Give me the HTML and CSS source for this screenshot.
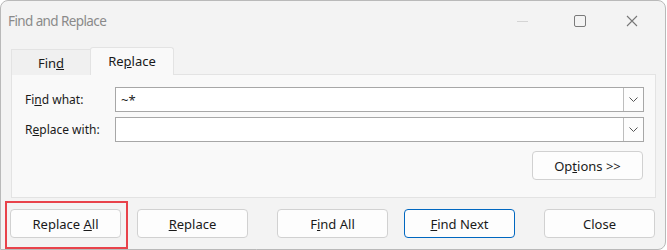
FILE: index.html
```html
<!DOCTYPE html>
<html lang="en">
<head>
    <meta charset="UTF-8">
    <title>Find and Replace</title>
    <link rel="stylesheet" href="styles.css">
</head>
<body>
    <div class="window">
        <div class="titlebar">
            <span class="title">Find and Replace</span>
            <div class="controls">
                <span class="ctl min"></span>
                <span class="ctl max"></span>
                <span class="ctl close">
                    <svg width="12" height="12" viewBox="0 0 12 12"><path d="M1 1 L11 11 M11 1 L1 11" stroke="#777" stroke-width="1.1" fill="none"/></svg>
                </span>
            </div>
        </div>

        <div class="tabs">
            <div class="tab">Fin<u>d</u></div>
            <div class="tab active">Re<u>p</u>lace</div>
        </div>

        <div class="panel">
            <div class="row">
                <label>Fi<u>n</u>d what:</label>
                <div class="combo">
                    <span class="value">~*</span>
                    <span class="drop"><svg width="9" height="5" viewBox="0 0 9 5"><path d="M0.5 0.5 L4.5 4.5 L8.5 0.5" stroke="#555" fill="none"/></svg></span>
                </div>
            </div>
            <div class="row">
                <label>R<u>e</u>place with:</label>
                <div class="combo">
                    <span class="value"></span>
                    <span class="drop"><svg width="9" height="5" viewBox="0 0 9 5"><path d="M0.5 0.5 L4.5 4.5 L8.5 0.5" stroke="#555" fill="none"/></svg></span>
                </div>
            </div>
            <div class="options-row">
                <button class="btn">Op<u>t</u>ions &gt;&gt;</button>
            </div>
        </div>

        <div class="actions">
            <button class="btn highlighted">Replace <u>A</u>ll</button>
            <button class="btn"><u>R</u>eplace</button>
            <button class="btn wide-gap">F<u>i</u>nd All</button>
            <button class="btn primary"><u>F</u>ind Next</button>
            <button class="btn wide-gap">Close</button>
        </div>
    </div>
</body>
</html>
```

FILE: styles.css
```css
body {
    margin: 0;
    font-family: 'Noto Sans', 'Open Sans', sans-serif;
    background-color: #ffffff;
}

.window {
    width: 666px;
    height: 250px;
    box-sizing: border-box;
    border: 1px solid #b9b9b9;
    border-radius: 8px 8px 8px 0;
    background-color: #f3f3f3;
    overflow: hidden;
}

.titlebar {
    height: 40px;
    display: flex;
    align-items: center;
    justify-content: space-between;
    padding-left: 7px;
}

.title {
    font-size: 13.5px;
    letter-spacing: -0.6px;
    color: #8a8a8a;
}

.controls {
    display: flex;
    align-items: center;
    height: 100%;
}

.ctl {
    width: 58px;
    height: 100%;
    display: flex;
    align-items: center;
    justify-content: center;
}

.min::before {
    content: '';
    width: 11px;
    border-top: 1px solid #d4d4d4;
}

.max::before {
    content: '';
    width: 10px;
    height: 10px;
    border: 1px solid #7a7a7a;
    border-radius: 2px;
}

.close {
    width: 46px;
    padding-right: 10px;
}

.tabs {
    display: flex;
    align-items: flex-end;
    height: 34px;
    margin-left: 10px;
    margin-bottom: -1px;
}

.tab {
    font-size: 13px;
    color: #1a1a1a;
    display: flex;
    align-items: center;
    justify-content: center;
    box-sizing: border-box;
}

.tab:first-child {
    width: 79px;
    height: 26px;
    border: 1px solid #e3e3e3;
    border-bottom: none;
    border-right: none;
    background-color: #f0f0f0;
}

.tab.active {
    width: 84px;
    height: 28px;
    background-color: #f9f9f9;
    border: 1px solid #e3e3e3;
    border-bottom: none;
    border-radius: 3px 3px 0 0;
    padding-bottom: 2px;
}

.panel {
    margin-left: 10px;
    width: 645px;
    height: 124px;
    box-sizing: border-box;
    background-color: #f9f9f9;
    border: 1px solid #e3e3e3;
    padding: 12px 11px 0 13px;
}

.row {
    display: flex;
    align-items: center;
    margin-bottom: 5px;
}

.row label {
    width: 90px;
    font-size: 12px;
    color: #1a1a1a;
}

.combo {
    flex: 1;
    height: 25px;
    box-sizing: border-box;
    border: 1px solid #a7a7a7;
    background-color: #ffffff;
    display: flex;
    align-items: center;
}

.value {
    flex: 1;
    padding-left: 5px;
    font-size: 13px;
    color: #1a1a1a;
}

.drop {
    width: 19px;
    height: 100%;
    border-left: 1px solid #bdbdbd;
    background-color: #fdfdfd;
    display: flex;
    align-items: center;
    justify-content: center;
}

.options-row {
    display: flex;
    justify-content: flex-end;
    margin-top: 9px;
    padding-right: 1px;
}

.btn {
    width: 111px;
    height: 29px;
    box-sizing: border-box;
    border: 1px solid #d1d1d1;
    border-radius: 4px;
    background-color: #fdfdfd;
    font-family: 'Noto Sans', 'Open Sans', sans-serif;
    font-size: 13px;
    color: #1a1a1a;
    padding: 0;
}

.actions {
    display: flex;
    margin-top: 11px;
    margin-left: 9px;
    gap: 16px;
}

.actions .wide-gap {
    margin-left: 13px;
}

.btn.primary {
    border-color: #0067c0;
}

.highlighted {
    position: relative;
}

.highlighted::after {
    content: '';
    position: absolute;
    left: -6px;
    top: -9px;
    width: 123px;
    height: 48px;
    box-sizing: border-box;
    border: 2px solid #e8424a;
}
```
